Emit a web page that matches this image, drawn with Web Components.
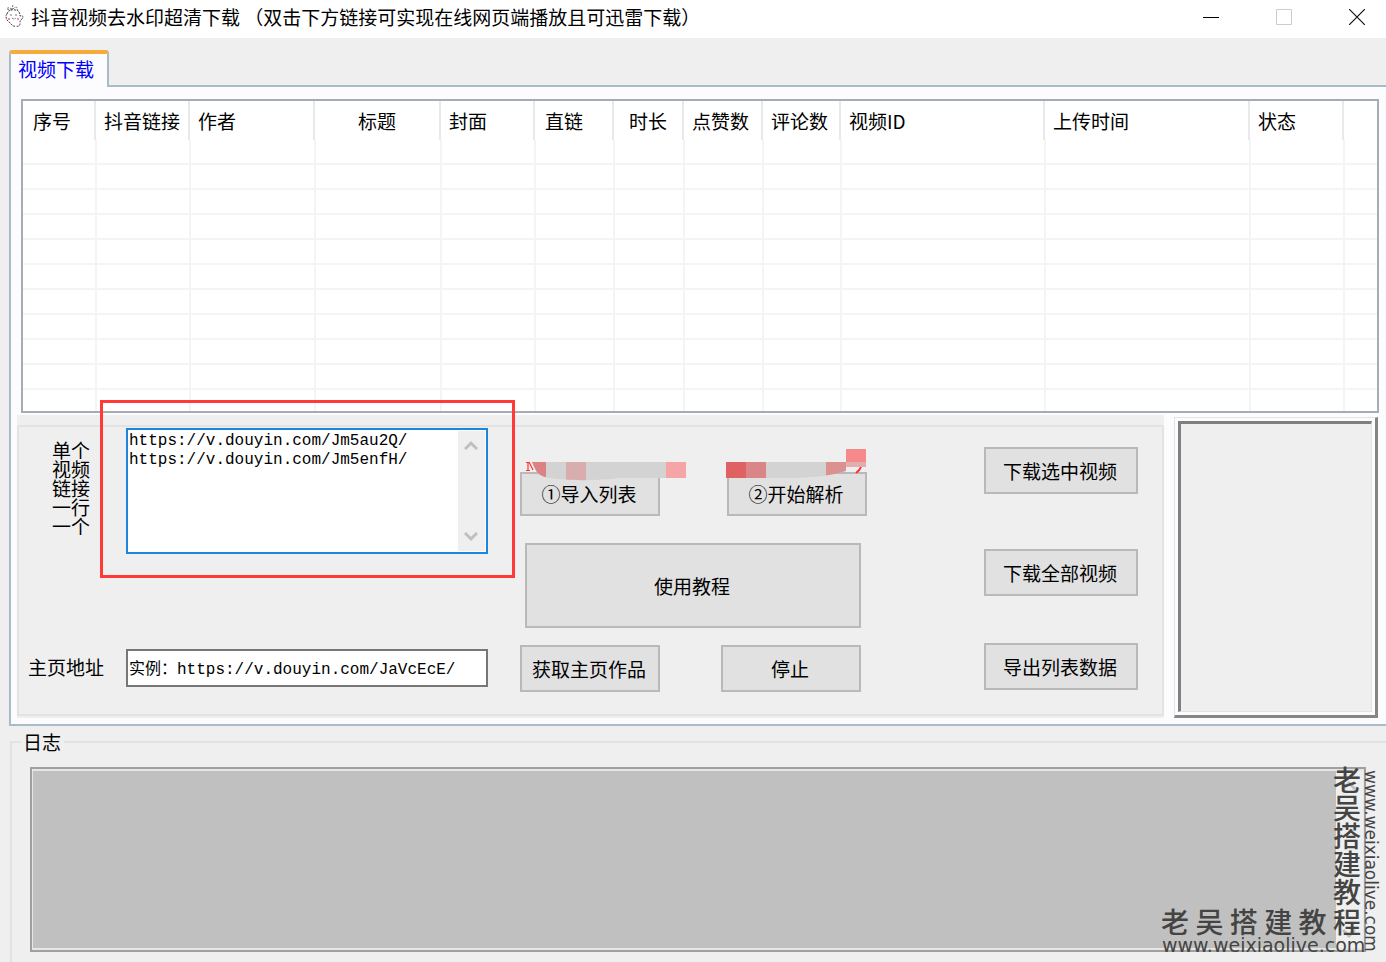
<!DOCTYPE html>
<html lang="zh-CN">
<head>
<meta charset="utf-8">
<title>抖音视频去水印超清下载</title>
<style>
  html, body { margin: 0; height: 100%; }
  body { background: #efefef; color: #000; font: 19px/20px "Noto Sans CJK SC", sans-serif; overflow: hidden; }
</style>
</head>
<body>
<app-window></app-window>
<script>
const define = (name, html, setup) => {
  const template = document.createElement('template');
  template.innerHTML = '<style>*{box-sizing:border-box}</style>' + html;
  customElements.define(name, class extends HTMLElement {
    constructor() {
      super();
      this.attachShadow({ mode: 'open' }).append(template.content.cloneNode(true));
      if (setup) setup(this.shadowRoot, this);
    }
  });
};

define('title-bar', `
<style>
  :host { display: flex; align-items: center; height: 38px; background: #fff; flex: none; }
  svg { display: block; }
  .icon { margin: 0 6px 6px 4px; }
  h1 { margin: 0 auto 4px 0; font: inherit; white-space: pre; }
  nav { display: flex; gap: 15px; height: 38px; padding-bottom: 4px; }
  button { width: 58px; border: 0; padding: 0; background: none; display: grid; place-items: center; }
</style>
<svg class="icon" width="21" height="26" viewBox="0 0 21 26" fill="none" stroke="#444" aria-hidden="true">
  <path d="M3 11C4 7 8 6 11 7C15 7 16 10 16 13C19 12 20 14 18 16C16 17 16 18 16 20C16 23 14 24 12 23M3 11C1 13 2 17 5 19C8 21 8 24 12 23" stroke-dasharray="2 1"/>
  <path d="M8 7L9 1M8 6C6 5 3 4 3 6C5 7 6 7 8 7M9 6C12 3 14 4 13 7M7 11V13M12 11V13M8 15Q10 17 12 15" stroke="#777" stroke-dasharray="2 1"/>
  <circle cx="5" cy="16" r="1" fill="#ff5ca0" stroke="none"/><circle cx="14" cy="16" r="1" fill="#ff5ca0" stroke="none"/>
</svg>
<h1>抖音视频去水印超清下载 （双击下方链接可实现在线网页端播放且可迅雷下载）</h1>
<nav>
  <button aria-label="最小化"><svg width="16" height="16"><path d="M0 8.500H16" stroke="#000"/></svg></button>
  <button aria-label="最大化" disabled><svg width="16" height="16"><path d="M.5 .5H15.500V15.500H.5Z" fill="none" stroke="#ccc"/></svg></button>
  <button aria-label="关闭"><svg width="16" height="16"><path d="M0 0L16 16M16 0L0 16" stroke="#111" stroke-width="1.200"/></svg></button>
</nav>`);

define('tab-panel', `
<style>
  :host { display: block; padding: 12px 0 0 9px; }
  button { display: block; position: relative; z-index: 1; width: 100px; height: 37px; margin-bottom: -2px; padding: 0 0 4px 7px; border: 2px solid #a9bbc7; border-width: 4px 2px 0; border-top-color: #f5ac3c; border-radius: 3px 3px 0 0; background: #fcfcff; color: #00f; font: inherit; text-align: left; }
  section { border: 2px solid #a9bbc7; border-right: 0; background: #fcfcff; padding: 12px 7px 6px 6px; }
</style>
<button role="tab" aria-selected="true">视频下载</button>
<section role="tabpanel"><slot></slot></section>`);

define('video-list', `
<style>
  :host { display: block; height: 314px; margin: 0 0 2px 4px; border: 2px solid #a5acb3; background: #fff; overflow: hidden; }
  table { width: 100%; table-layout: fixed; border-collapse: separate; border-spacing: 0; }
  th { height: 39px; padding: 0 0 0 7px; font-weight: 400; text-align: left; white-space: nowrap; background: linear-gradient(#e9e9e9, #e9e9e9) right 1px top 0 / 2px 100% no-repeat; }
  th:first-child { padding-left: 10px; }
  th.mid { text-align: center; padding: 0 4px 0 0; }
  th.wide { padding-left: 9px; }
  td { height: 25px; padding: 0; border: solid #f4f4f4; border-width: 0 2px 2px 0; }
  th:last-child { background: none; } td:last-child { border-right: 0; }
</style>
<table><colgroup></colgroup><thead><tr></tr></thead><tbody></tbody></table>`, root => {
  const cols = [['序号', 74], ['抖音链接', 94], ['作者', 125], ['标题', 126, 'mid'], ['封面', 94], ['直链', 79, 'wide'], ['时长', 70, 'mid'], ['点赞数', 79], ['评论数', 78], ['视频ID', 204], ['上传时间', 205], ['状态', 94], ['', 0]];
  root.querySelector('colgroup').innerHTML = cols.map(c => `<col${c[1] ? ` style="width:${c[1]}px"` : ''}>`).join('');
  root.querySelector('tr').innerHTML = cols.map(c => `<th scope="col" class="${c[2] || ''}">${c[0]}</th>`).join('');
  root.querySelector('tbody').innerHTML = ('<tr>' + '<td></td>'.repeat(cols.length) + '</tr>').repeat(11);
});

define('push-button', `
<style>
  :host { display: block; height: 47px; }
  button { width: 100%; height: 100%; padding: 0 2px 0 0; border: 2px solid #b9b9b9; background: #e1e1e1; color: #000; font: inherit; white-space: nowrap; }
</style>
<button><slot></slot></button>`);

define('scroll-strip', `
<style>
  :host { display: flex; flex-direction: column; justify-content: space-between; align-items: center; width: 27px; padding: 9px 2px 9px 0; background: #efefef; }
</style>
<svg width="14" height="10" fill="none" stroke="#bfbfbf" stroke-width="3"><path d="M1 9L7 3L13 9"/></svg>
<svg width="14" height="10" fill="none" stroke="#bfbfbf" stroke-width="3"><path d="M1 1L7 7L13 1"/></svg>`);

define('link-form', `
<style>
  :host { display: grid; grid-template-columns: 107px 362px; grid-template-rows: 126px 38px; row-gap: 95px; padding-top: 1px; }
  .tall { width: 38px; margin: 12px 0 0 33px; line-height: 19px; }
  .home { margin-left: 9px; align-self: center; padding-bottom: 2px; }
  .area { display: flex; border: 2px solid #1c86dc; background: #fff; padding: 1px 1px 1px 0; }
  textarea { flex: 1; min-width: 0; border: 0; outline: 0; padding: 1px 0 0 1px; resize: none; overflow: hidden; background: none; color: #000; font: 16px/19px "Liberation Mono", "Noto Sans CJK SC", monospace; }
  input { width: 100%; height: 38px; border: 2px solid #777; padding: 0 0 3px 1px; background: #fff; color: #000; font: 16px/20px "Liberation Mono", "Noto Sans CJK SC", monospace; }
</style>
<label class="tall" for="links">单个视频链接一行一个</label>
<div class="area"><textarea id="links" spellcheck="false">https://v.douyin.com/Jm5au2Q/
https://v.douyin.com/Jm5enfH/</textarea><scroll-strip></scroll-strip></div>
<label class="home" for="home">主页地址</label>
<input id="home" value="实例：https://v.douyin.com/JaVcEcE/" spellcheck="false">`);

define('parse-actions', `
<style>
  :host { display: block; position: relative; width: 347px; padding-top: 45px; }
  .row { display: flex; justify-content: space-between; }
  .row push-button { width: 140px; }
  .first push-button { height: 44px; }
  .guide { height: 85px; margin: 27px 6px 17px 5px; }
  .last { padding-right: 6px; }
  svg { position: absolute; left: 0; top: 20px; pointer-events: none; }
</style>
<div class="row first"><push-button>①导入列表</push-button><push-button>②开始解析</push-button></div>
<push-button class="guide">使用教程</push-button>
<div class="row last"><push-button>获取主页作品</push-button><push-button>停止</push-button></div>
<svg width="350" height="36" aria-hidden="true">
  <clipPath id="a"><path d="M12 15H166V31H100C75 34 45 34 25 30C17 28 15 22 12 15Z"/></clipPath>
  <g clip-path="url(#a)"><path fill="#d3d3d3" d="M10 15H166V36H10Z"/><path fill="#db8383" d="M10 15H26V36H10Z"/><path fill="#d9adad" d="M46 15H66V36H46Z"/><path fill="#f5a5a5" d="M146 15H166V36H146Z"/></g>
  <path fill="none" stroke="#f33" stroke-width="1.200" d="M6 15.500H9M8 15V23M6 23.500H10M9 15L13 23"/>
  <clipPath id="b"><path d="M206 15H346V20L326 24C306 30 286 31 270 31H206Z"/></clipPath>
  <g clip-path="url(#b)"><path fill="#e06161" d="M206 15H226V36H206Z"/><path fill="#db8686" d="M226 15H246V36H226Z"/><path fill="#d3d3d3" d="M246 15H306V36H246Z"/><path fill="#dc9191" d="M306 15H326V36H306Z"/></g>
  <path fill="#f68989" d="M326 2H346V15H326Z"/><path fill="#e1adad" d="M326 15H346V20H326Z"/>
  <path fill="none" stroke="#f33" stroke-width="2" d="M341 20Q340 23 336 26"/>
</svg>`);

define('export-actions', `
<style>
  :host { display: block; width: 154px; padding-top: 20px; }
  push-button + push-button { margin-top: 55px; }
  push-button:last-of-type { margin-top: 47px; }
</style>
<push-button>下载选中视频</push-button>
<push-button>下载全部视频</push-button>
<push-button>导出列表数据</push-button>`);

define('control-group', `
<style>
  :host { display: block; position: relative; flex: 1; background: #efefef; padding-top: 10px; }
  .box { display: flex; border: 2px solid #e3e3e3; height: 291px; padding-right: 24px; }
  parse-actions { margin-left: 32px; }
  export-actions { margin-left: auto; }
  .mark { position: absolute; left: 83px; top: -15px; width: 415px; height: 178px; border: 3px solid #ff3838; pointer-events: none; }
</style>
<div class="box"><link-form></link-form><parse-actions></parse-actions><export-actions></export-actions></div>
<div class="mark"></div>`);

define('preview-frame', `
<style>
  :host { display: block; width: 204px; height: 301px; padding: 3px; border: 3px solid #868686; border-top: 1px solid #e3e3e3; border-left: 1px solid #e3e3e3; margin: 2px 1px 0 10px; }
  div { height: 100%; background: #efefef; border: 1px solid #e3e3e3; border-top: 3px solid #7f7f7f; border-left: 3px solid #7f7f7f; }
</style>
<div></div>`);

define('log-group', `
<style>
  :host { display: flex; flex: 1; padding: 6px 0 0 10px; min-height: 0; }
  fieldset { flex: 1; min-width: 0; margin: 0; padding: 15px 20px 10px 18px; border: 2px solid #e2e2e2; border-width: 2px 0 0 2px; display: flex; }
  legend { padding: 0 3px 0 2px; margin-left: -9px; }
  .view { flex: 1; height: 100%; display: flex; border: 2px solid #a0a0a0; background: #e6e6e6; padding: 2px 1px 2px 1px; }
  textarea { flex: 1; border: 0; padding: 0; background: #c0c0c0; resize: none; outline: 0; font: inherit; }
</style>
<fieldset><legend>日志</legend><div class="view"><textarea readonly aria-label="日志"></textarea><scroll-strip></scroll-strip></div></fieldset>`);

define('site-watermark', `
<style>
  :host { position: absolute; right: 0; bottom: 0; width: 226px; height: 200px; color: #444; pointer-events: none; font-weight: 500; }
  span { position: absolute; white-space: nowrap; }
  .name { left: 1px; bottom: 27px; width: 200px; font-size: 28px; line-height: 28px; text-align-last: justify; }
  .url { left: 2px; bottom: 7px; font: 19px/19px "DejaVu Sans", sans-serif; }
  .side { right: 25px; top: 4px; writing-mode: vertical-rl; font-size: 28px; line-height: 28px; }
  .side-url { right: 6px; top: 8px; writing-mode: vertical-rl; font: 17px/18px "DejaVu Sans", sans-serif; }
</style>
<span class="name">老吴搭建教程</span><span class="url">www.weixiaolive.com</span>
<span class="side">老吴搭建教</span><span class="side-url">www.weixiaolive.com</span>`);

define('app-window', `
<style>
  :host { display: flex; flex-direction: column; position: relative; height: 100vh; overflow: hidden; }
  .lower { display: flex; }
</style>
<title-bar></title-bar>
<tab-panel>
  <video-list></video-list>
  <div class="lower"><control-group></control-group><preview-frame></preview-frame></div>
</tab-panel>
<log-group></log-group>
<site-watermark></site-watermark>`);
</script>
</body>
</html>
